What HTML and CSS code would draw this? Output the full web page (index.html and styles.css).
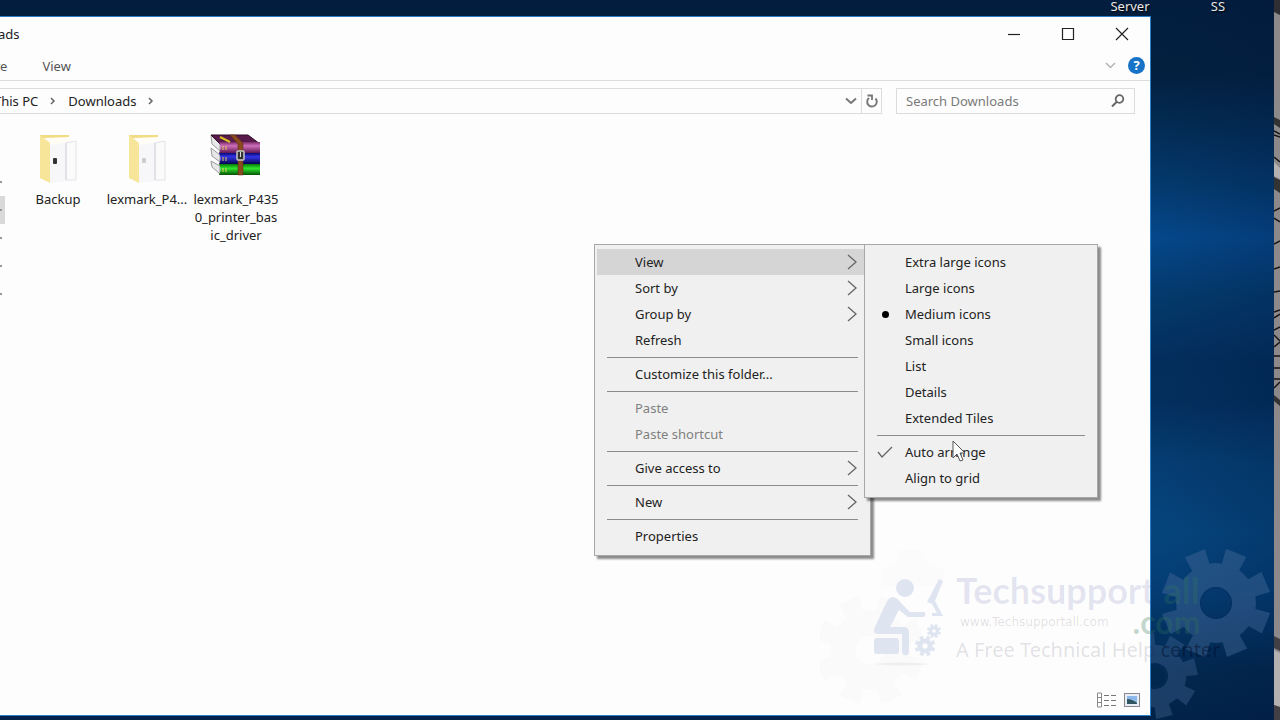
FILE: index.html
```html
<!DOCTYPE html>
<html lang="en">
<head>
    <meta charset="UTF-8">
    <meta name="viewport" content="width=device-width, initial-scale=1.0">
    <title>Downloads</title>
    <link rel="stylesheet" href="styles.css">
</head>
<body>
    <div class="desktop">
        <div class="shortcuts">
            <span>Server</span>
            <span>SS</span>
        </div>

        <main class="window">
            <header class="titlebar">
                <span class="title">ads</span>
                <div class="window-buttons">
                    <button aria-label="Minimize"><svg width="14" height="14" viewBox="0 0 14 14"><path d="M1 7.5h12"/></svg></button>
                    <button aria-label="Maximize"><svg width="14" height="14" viewBox="0 0 14 14"><path d="M1.5 1.5h11v11h-11z"/></svg></button>
                    <button aria-label="Close"><svg width="14" height="14" viewBox="0 0 14 14"><path d="M1 1l12 12M13 1L1 13"/></svg></button>
                </div>
            </header>

            <div class="ribbon">
                <button class="tab">re</button>
                <button class="tab">View</button>
                <div class="ribbon-right">
                    <button aria-label="Expand the ribbon"><svg width="11" height="7" viewBox="0 0 11 7"><path d="M1 1l4.5 4.5L10 1" fill="none" stroke="#b4b4b4" stroke-width="1.5"/></svg></button>
                    <button class="help" aria-label="Help">?</button>
                </div>
            </div>

            <div class="toolbar">
                <div class="address">
                    <button class="crumb">This PC</button>
                    <svg width="6" height="8" viewBox="0 0 6 8"><path d="M1 1l3 3-3 3" fill="none" stroke="#666" stroke-width="1.5"/></svg>
                    <button class="crumb">Downloads</button>
                    <svg width="6" height="8" viewBox="0 0 6 8"><path d="M1 1l3 3-3 3" fill="none" stroke="#666" stroke-width="1.5"/></svg>
                    <div class="address-end">
                        <button class="history" aria-label="Previous locations"><svg width="12" height="8" viewBox="0 0 12 8"><path d="M1 1.5l5 4.5 5-4.5" fill="none" stroke="#777" stroke-width="2"/></svg></button>
                        <button class="refresh" aria-label="Refresh"><svg width="14" height="14" viewBox="0 0 14 14"><path d="M10.500 4.500a4.800 4.800 0 1 1-6.500-.5" fill="none" stroke="#777" stroke-width="1.900"/><path d="M2.500 1.500H7v4.500" fill="none" stroke="#777" stroke-width="1.800"/></svg></button>
                    </div>
                </div>
                <div class="search">
                    <input type="text" placeholder="Search Downloads" aria-label="Search Downloads">
                    <svg width="14" height="14" viewBox="0 0 14 14"><circle cx="8.5" cy="5" r="3.8" fill="none" stroke="#666" stroke-width="1.8"/><path d="M5.8 7.8L1 12.5" stroke="#666" stroke-width="2"/></svg>
                </div>
            </div>

            <div class="content">
                <nav class="sidebar" aria-label="Quick access">
                    <span></span>
                    <span class="selected"></span>
                    <span></span>
                    <span></span>
                    <span></span>
                </nav>
                <div class="files">
                    <div class="file">
                        <svg width="48" height="50" viewBox="0 0 48 50">
                            <path d="M6 1h29v10L16 48 6 44z" fill="#f1dc84"/>
                            <path d="M10 4l25-1v9l-19 6z" fill="#fffdf5"/>
                            <path d="M16 11l25-4v39l-25 3z" fill="#f7f7f9"/>
                            <path d="M32 9l10-2v39H32z" fill="#fbfbfc" stroke="#e4e4ea"/>
                            <path d="M32 9v37" stroke="#d4d4dc"/>
                            <path d="M6 1l10 8v40L6 44z" fill="#f7e59a"/>
                            <rect x="19" y="24" width="4" height="6" rx="1" fill="#333"/>
                        </svg>
                        <span>Backup</span>
                    </div>
                    <div class="file">
                        <svg width="48" height="50" viewBox="0 0 48 50">
                            <path d="M6 1h29v10L16 48 6 44z" fill="#f1dc84"/>
                            <path d="M10 4l25-1v9l-19 6z" fill="#fffdf5"/>
                            <path d="M16 11l25-4v39l-25 3z" fill="#f7f7f9"/>
                            <path d="M32 9l10-2v39H32z" fill="#fbfbfc" stroke="#e4e4ea"/>
                            <path d="M32 9v37" stroke="#d4d4dc"/>
                            <path d="M6 1l10 8v40L6 44z" fill="#f7e59a"/>
                            <rect x="19" y="24" width="4" height="5" rx="1" fill="#ccc"/>
                        </svg>
                        <span>lexmark_P4...</span>
                    </div>
                    <div class="file">
                        <svg width="52" height="50" viewBox="0 0 52 50">
                            <defs>
                                <linearGradient id="purple" x2="0" y2="1"><stop stop-color="#7c2a6b"/><stop offset=".35" stop-color="#cf70bd"/><stop offset="1" stop-color="#5e1650"/></linearGradient>
                                <linearGradient id="blue" x2="0" y2="1"><stop stop-color="#080878"/><stop offset=".35" stop-color="#3434e6"/><stop offset="1" stop-color="#040450"/></linearGradient>
                                <linearGradient id="green" x2="0" y2="1"><stop stop-color="#067a06"/><stop offset=".4" stop-color="#2fe62f"/><stop offset="1" stop-color="#045004"/></linearGradient>
                            </defs>
                            <path d="M1 1l9 9v7l-8-7zM1 14l9 7v7l-8-6zM1 27l9 5v8l-8-7z" fill="#e8e8ea" stroke="#999"/>
                            <path d="M1 1h37l12 9H10z" fill="#581a4a" stroke="#2c0b25"/>
                            <path d="M9 8h41v11H9q3-5 0-11z" fill="url(#purple)"/>
                            <path d="M9 19h41v11H9q3-5 0-11z" fill="url(#blue)"/>
                            <path d="M9 30h41v11H9q3-5 0-11z" fill="url(#green)"/>
                            <path d="M10 3l10 5" stroke="#d8c020" stroke-width="2"/>
                            <path d="M13 12v4m3-4v4M13 23v4m3-4v4M13 34v4m3-4v4" stroke="#e9c95a"/>
                            <path d="M20 1h5l8 8v32h-5V10z" fill="#8a4a20" stroke="#55290d" stroke-width=".5"/>
                            <rect x="27" y="17" width="7" height="9" rx="1" fill="#333" stroke="#c8c8c8" stroke-width="1.5"/>
                            <path d="M30.5 18v5" stroke="#ddd"/>
                        </svg>
                        <span>lexmark_P435<br>0_printer_bas<br>ic_driver</span>
                    </div>
                </div>
            </div>

            <footer class="statusbar">
                <button aria-label="Details view"><svg width="20" height="16" viewBox="0 0 20 16"><path d="M1.5 1h4v14h-4zM1.5 5.5h4M1.5 10.5h4" fill="#fff" stroke="#888"/><path d="M8 3.5h5m2 0h5M8 8.5h5m2 0h5M8 13.5h5m2 0h5" stroke="#777"/></svg></button>
                <button aria-label="Large icons view"><svg width="16" height="14" viewBox="0 0 16 14"><rect x=".5" y=".5" width="15" height="13" fill="#e8eef5" stroke="#888"/><rect x="3" y="3" width="10" height="8" fill="#8db8ec"/><path d="M3 6q5 0 10 4v1H3z" fill="#2f5560"/></svg></button>
            </footer>
        </main>

        <div class="menu context-menu" role="menu">
            <button class="active" role="menuitem">View<svg width="10" height="16" viewBox="0 0 10 16"><path d="M1 1l8 7-8 7"/></svg></button>
            <button role="menuitem">Sort by<svg width="10" height="16" viewBox="0 0 10 16"><path d="M1 1l8 7-8 7"/></svg></button>
            <button role="menuitem">Group by<svg width="10" height="16" viewBox="0 0 10 16"><path d="M1 1l8 7-8 7"/></svg></button>
            <button role="menuitem">Refresh</button>
            <hr>
            <button role="menuitem">Customize this folder...</button>
            <hr>
            <button role="menuitem" disabled>Paste</button>
            <button role="menuitem" disabled>Paste shortcut</button>
            <hr>
            <button role="menuitem">Give access to<svg width="10" height="16" viewBox="0 0 10 16"><path d="M1 1l8 7-8 7"/></svg></button>
            <hr>
            <button role="menuitem">New<svg width="10" height="16" viewBox="0 0 10 16"><path d="M1 1l8 7-8 7"/></svg></button>
            <hr>
            <button role="menuitem">Properties</button>
        </div>

        <div class="menu view-menu" role="menu">
            <button role="menuitemradio" aria-checked="false">Extra large icons</button>
            <button role="menuitemradio" aria-checked="false">Large icons</button>
            <button class="picked" role="menuitemradio" aria-checked="true">Medium icons</button>
            <button role="menuitemradio" aria-checked="false">Small icons</button>
            <button role="menuitemradio" aria-checked="false">List</button>
            <button role="menuitemradio" aria-checked="false">Details</button>
            <button role="menuitemradio" aria-checked="false">Extended Tiles</button>
            <hr>
            <button role="menuitemcheckbox" aria-checked="true"><svg class="tick" width="16" height="12" viewBox="0 0 16 12"><path d="M1 6l4 5L15 1"/></svg>Auto arrange</button>
            <button role="menuitemcheckbox" aria-checked="false">Align to grid</button>
        </div>

        <div class="watermark">
            <svg width="460" height="180" viewBox="0 0 460 180">
                <defs>
                    <path id="tooth" d="M-9 -37L-11 -54H11L9 -37z"/>
                    <g id="gear">
                        <circle r="27" fill="none" stroke-width="26" stroke="currentColor"/>
                        <g fill="currentColor">
                            <use href="#tooth" transform="rotate(22)"/>
                            <use href="#tooth" transform="rotate(67)"/>
                            <use href="#tooth" transform="rotate(112)"/>
                            <use href="#tooth" transform="rotate(157)"/>
                            <use href="#tooth" transform="rotate(202)"/>
                            <use href="#tooth" transform="rotate(247)"/>
                            <use href="#tooth" transform="rotate(292)"/>
                            <use href="#tooth" transform="rotate(337)"/>
                        </g>
                    </g>
                </defs>
                <!-- gears on the wallpaper -->
                <g color="#4a6d9c" opacity=".42">
                    <use href="#gear" transform="translate(396 63)"/>
                    <circle cx="396" cy="63" r="15" fill="none" stroke="#022a5a" stroke-width="2"/>
                </g>
                <svg x="331" width="129" height="180" viewBox="331 0 129 180">
                    <g color="#4a6d9c" opacity=".35">
                        <use href="#gear" transform="translate(335 136) rotate(10) scale(.78)"/>
                        <circle cx="335" cy="136" r="12" fill="none" stroke="#022a5a" stroke-width="2"/>
                    </g>
                </svg>
                <!-- faint gears on the window -->
                <g color="#fafafa">
                    <use href="#gear" transform="translate(50 110)"/>
                </g>
                <path d="M62 28l14-4 4-14h22l5 14 17 4v18H62z" fill="#fbfbfb"/>
                <!-- man at the computer -->
                <g fill="#dfe5f0">
                    <circle cx="85" cy="48" r="9"/>
                    <path d="M73 57q5 1 8 6l9 9h14q3 2 0 5H88l-9-7-9 17h15q4 1 4 5v21q-3 5-7 0V94H57q-4-1-3-5l12-26q3-6 7-6z"/>
                    <rect x="54" y="98" width="25" height="16" rx="3"/>
                    <path d="M119 39l4 2-8 20 8 15h-11v-3h5l-5-9-5-2z"/>
                </g>
                <g color="#dfe5f0">
                    <use href="#gear" transform="translate(105 106) scale(.19)"/>
                    <use href="#gear" transform="translate(114 91) scale(.13)"/>
                </g>
                <path d="M53 124q28-3 57 0-28 3-57 0z" fill="#eeeeee"/>
            </svg>
            <div class="watermark-text">
                <div class="brand">Techsupport <span>all</span></div>
                <div class="site"><span>www.Techsupportall.com</span><b>.com</b></div>
                <div class="slogan">A Free Technical Help <span>center</span></div>
            </div>
        </div>

        <svg class="cursor" width="14" height="22" viewBox="0 0 14 22"><path d="M1 1v17l4-4 3 7 3-1-3-7h5z" fill="#fff" stroke="#555"/></svg>
    </div>

    <!-- line drawing showing past the right edge of the desktop -->
    <svg class="edge" viewBox="0 0 6 720" preserveAspectRatio="xMinYMin slice">
        <path d="M0 0h6v720H0z" fill="#8d898b"/>
        <path d="M0 0h6v15l-6-3z" fill="#2f2f33"/>
        <path d="M0 117l6 3v8l-6-4zM0 177l6 3v13l-6-4zM0 395l6 5v6l-6-5z" fill="#333"/>
        <path d="M0 131l6 3M0 135l6 2M0 157l6 5M0 211l6-3M0 218l6 4M0 244l6-3M0 269l6-2M0 292l6-1M0 312l6-2M0 318l6-4M0 330l6-3M0 335l6 6M0 347l6-5M0 356h6M0 368h6M0 379h6M0 388l6-6" stroke="#151515" fill="none" stroke-width="1.5"/>
        <path d="M0 162l6 6v11l-6-3zM0 650l6 3v54l-6-2z" fill="#b5b1b1"/>
        <path d="M0 636l6 3v12l-6-3zM0 705l6 2v13H0z" fill="#424044"/>
    </svg>
</body>
</html>
```

FILE: styles.css
```css
* {
    box-sizing: border-box;
}

body {
    margin: 0;
    display: flex;
    min-height: 100vh;
    overflow: hidden;
    font-family: 'Noto Sans', 'Open Sans', sans-serif;
    font-size: 13px;
    line-height: 18px;
    color: #222;
}

button {
    padding: 0;
    border: none;
    background: none;
    font: inherit;
    color: inherit;
}

svg {
    display: block;
    flex-shrink: 0;
}

.desktop {
    position: relative;
    flex: 1;
    min-width: 0;
    display: flex;
    flex-direction: column;
    padding: 0 123px 4px 0;
    background:
        linear-gradient(90deg, transparent 91%, rgba(0, 20, 60, 0.2)),
        linear-gradient(180deg, #021d3e 0, #03203f 10%, #032c55 18%, #043a6e 26%, #05478a 33%, #043a6c 41%, #032e5c 50%, #032f5d 56%, #053d72 64%, #05457c 74%, #043d74 82%, #02284f 93%, #022349 100%);
}

.edge {
    width: 6px;
    height: 100vh;
}

.shortcuts {
    display: flex;
    height: 16px;
    margin-right: -111px;
    justify-content: flex-end;
    line-height: 12px;
    color: #e8e8e8;
    text-shadow: 1px 1px 2px #000;
}

.shortcuts span {
    width: 88px;
    text-align: center;
}

/* explorer window */
.window {
    flex: 1;
    display: flex;
    flex-direction: column;
    background: #fdfdfd;
    border: 1px solid #2a7fc8;
    border-left: none;
    overflow: hidden;
}

.titlebar {
    display: flex;
    align-items: center;
    justify-content: space-between;
    height: 34px;
    padding-right: 21px;
}

.title {
    margin-left: -2px;
}

.window-buttons {
    display: flex;
    gap: 40px;
}

.window-buttons path {
    fill: none;
    stroke: #222;
    stroke-width: 1.2px;
}

.ribbon {
    display: flex;
    align-items: center;
    gap: 35px;
    height: 30px;
    padding-right: 5px;
    border-bottom: 1px solid #dcdcdc;
    color: #555;
}

.tab:first-child {
    margin-left: -5px;
}

.ribbon-right {
    display: flex;
    align-items: center;
    gap: 12px;
    margin-left: auto;
}

.help {
    width: 17px;
    height: 17px;
    border-radius: 50%;
    background: #1673c8;
    color: #fff;
    font-weight: bold;
    line-height: 17px;
}

.toolbar {
    display: flex;
    gap: 14px;
    padding: 7px 15px 0 0;
}

.address {
    flex: 1;
    display: flex;
    align-items: center;
    gap: 12px;
    height: 26px;
    border: 1px solid #dcdcdc;
    border-left: none;
}

.crumb:first-child {
    margin-left: -6px;
}

.address-end {
    display: flex;
    align-self: stretch;
    margin-left: auto;
}

.history,
.refresh {
    display: flex;
    align-items: center;
    justify-content: center;
    width: 20px;
}

.refresh {
    border-left: 1px solid #dcdcdc;
}

.search {
    display: flex;
    align-items: center;
    width: 239px;
    padding: 0 9px;
    border: 1px solid #dcdcdc;
}

.search input {
    flex: 1;
    min-width: 0;
    padding: 0;
    border: none;
    outline: none;
    background: none;
    font: inherit;
}

.search input::placeholder {
    color: #7a7a7a;
}

.content {
    flex: 1;
    display: flex;
    gap: 11px;
    padding-top: 20px;
}

.sidebar {
    width: 5px;
    padding-top: 34px;
}

.sidebar span {
    display: flex;
    align-items: center;
    height: 28px;
}

.sidebar span::before {
    content: "";
    width: 2px;
    height: 2px;
    background: #999;
}

.sidebar .selected {
    background: #d9d9d9;
}

.files {
    display: flex;
    gap: 5px;
}

.file {
    display: flex;
    flex-direction: column;
    align-items: center;
    gap: 6px;
    width: 84px;
    text-align: center;
    white-space: nowrap;
}

.statusbar {
    display: flex;
    align-items: center;
    justify-content: flex-end;
    gap: 8px;
    height: 30px;
    padding-right: 10px;
}

/* menus */
.menu {
    position: absolute;
    top: 244px;
    padding: 4px 2px 6px;
    background: #f0f0f0;
    border: 1px solid #a8a8a8;
    box-shadow: 3px 3px 2px rgba(0, 0, 0, 0.45);
}

.context-menu {
    left: 594px;
    width: 277px;
}

.view-menu {
    left: 864px;
    width: 234px;
}

.menu button {
    display: flex;
    align-items: center;
    width: 100%;
    height: 26px;
    padding: 0 11px 0 38px;
    text-align: left;
}

.menu button svg {
    margin-left: auto;
}

.menu path {
    fill: none;
    stroke: #666;
    stroke-width: 1.3px;
}

.menu .active {
    background: #d5d5d5;
}

.menu button:disabled {
    color: #808080;
}

.menu hr {
    height: 1px;
    margin: 4px 10px 3px;
    border: none;
    background: #8c8c8c;
}

.menu .picked::before {
    content: "";
    width: 7px;
    height: 7px;
    margin: 0 16px 0 -23px;
    border-radius: 50%;
    background: #000;
}

.menu button .tick {
    margin: 0 12px 0 -28px;
}

/* watermark over the corner of the screen */
.watermark {
    position: absolute;
    right: 0;
    bottom: 0;
    width: 454px;
    height: 180px;
    pointer-events: none;
}

.watermark-text {
    position: absolute;
    top: 31px;
    left: 136px;
    white-space: nowrap;
    color: rgba(30, 30, 70, 0.14);
}

.brand {
    font: bold 36px/38px Lato, sans-serif;
    color: rgba(50, 60, 150, 0.12);
}

.brand span,
.site b {
    color: rgba(50, 120, 90, 0.3);
}

.site {
    display: flex;
    align-items: center;
    gap: 24px;
    height: 26px;
    padding-left: 4px;
    font-family: 'DejaVu Sans', sans-serif;
    font-size: 12px;
}

.site b {
    font: bold 32px/26px Lato, sans-serif;
}

.slogan {
    font-size: 20px;
    line-height: 30px;
}

.slogan span {
    color: rgba(0, 10, 40, 0.45);
}

.cursor {
    position: absolute;
    left: 952px;
    top: 440px;
}
```
